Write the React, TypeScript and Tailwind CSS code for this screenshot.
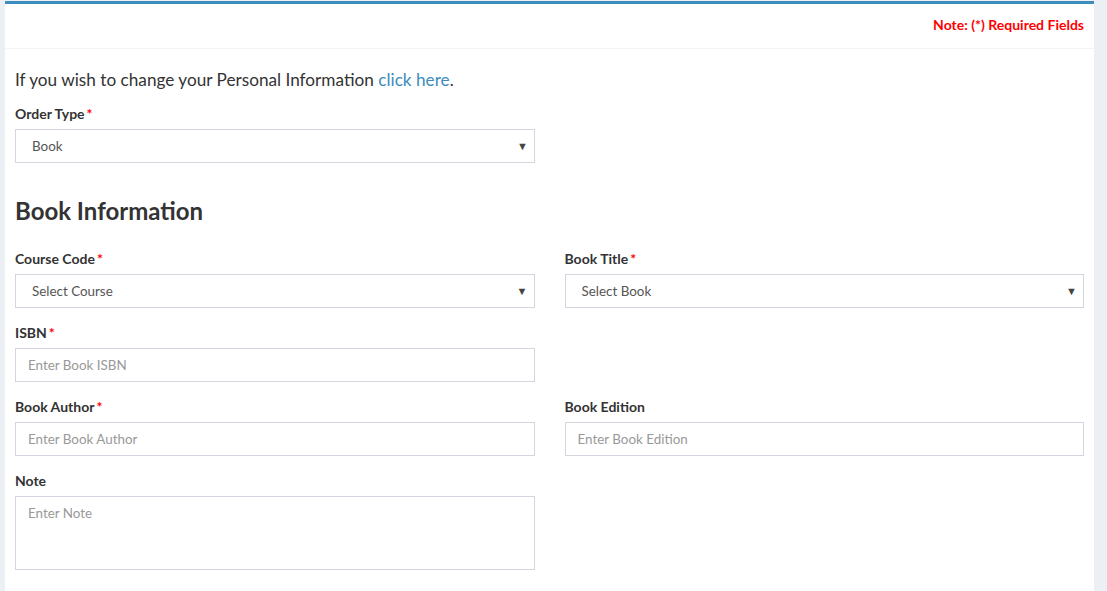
import { useState } from 'react'

const Req = () => <span className="ml-0.5 text-[#ff0000]">*</span>

function Label({ text, req }: { text: string; req?: boolean }) {
  return (
    <label className="mb-[5px] block h-5 text-[14px] font-bold leading-5 text-[#333]">
      {text}
      {req && <Req />}
    </label>
  )
}

function Select({ value }: { value: string }) {
  return (
    <div className="relative h-[34px] border border-[#d2d6de] bg-white">
      <span className="absolute left-[16px] top-0 text-[13.4px] leading-[32px] text-[#555]">{value}</span>
      <span className="absolute right-[6px] top-0 text-[11px] leading-[32px] text-[#444]">▼</span>
    </div>
  )
}

function Input({ ph }: { ph: string }) {
  const [v, setV] = useState('')
  return (
    <input
      value={v}
      onChange={(e) => setV(e.target.value)}
      placeholder={ph}
      className="block h-[34px] w-full border border-[#d2d6de] px-3 text-[13.4px] text-[#555] outline-none placeholder:text-[#999]"
    />
  )
}

export default function App() {
  return (
    <div className="min-h-[591px] bg-[#ecf0f5] pl-[5px] pr-[13px] pt-px font-['Lato',sans-serif]">
      <div className="border-t-[3px] border-[#3c8dbc] bg-white">
        {/* header */}
        <div className="flex h-[45px] items-center justify-end border-b border-[#f4f4f4] px-[10px]">
          <span className="-mt-1 text-[14px] font-bold text-[#ff0000]">Note: (*) Required Fields</span>
        </div>

        <div className="px-[10px] pt-[19px] pb-10">
          <p className="mb-[12px] text-[17.2px] leading-6 text-[#333]">
            If you wish to change your Personal Information{' '}
            <a href="#" className="text-[#3c8dbc]">click here</a>.
          </p>

          <div className="w-[520px]">
            <Label text="Order Type" req />
            <Select value="Book" />
          </div>

          <h3 className="mt-[34px] mb-[24px] text-[24px] font-bold leading-7 text-[#333]">Book Information</h3>

          <div className="grid grid-cols-2 gap-x-[30px] gap-y-[15px]">
            <div>
              <Label text="Course Code" req />
              <Select value="Select Course" />
            </div>
            <div>
              <Label text="Book Title" req />
              <Select value="Select Book" />
            </div>
            <div>
              <Label text="ISBN" req />
              <Input ph="Enter Book ISBN" />
            </div>
            <div />
            <div>
              <Label text="Book Author" req />
              <Input ph="Enter Book Author" />
            </div>
            <div>
              <Label text="Book Edition" />
              <Input ph="Enter Book Edition" />
            </div>
            <div>
              <Label text="Note" />
              <textarea
                placeholder="Enter Note"
                className="block h-[74px] w-full resize-none border border-[#d2d6de] px-3 py-[6px] text-[13.4px] outline-none placeholder:text-[#999]"
              />
            </div>
          </div>
        </div>
      </div>
    </div>
  )
}
